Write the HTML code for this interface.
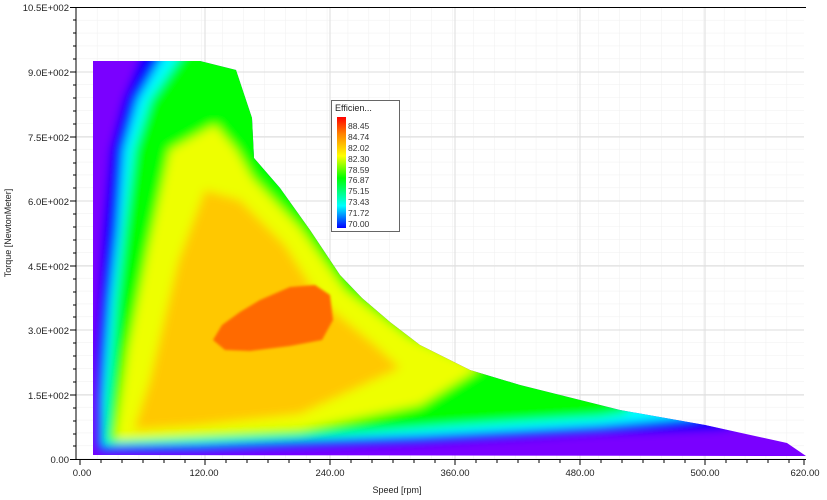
<!DOCTYPE html>
<html><head><meta charset="utf-8"><style>
html,body{margin:0;padding:0;background:#fff;}
svg{display:block;font-family:"Liberation Sans",sans-serif;}
</style></head><body>
<svg width="827" height="500" viewBox="0 0 827 500" xmlns="http://www.w3.org/2000/svg">
<defs>
<pattern id="g" x="76" y="7" width="20.9" height="12.9" patternUnits="userSpaceOnUse">
<path d="M0 0V12.9M0 0H20.9" stroke="#efefef" stroke-width="1" fill="none"/>
</pattern>
<filter id="b" x="-10%" y="-10%" width="120%" height="120%"><feGaussianBlur stdDeviation="5"/></filter>
<filter id="b2"><feGaussianBlur stdDeviation="1.2"/></filter>
<clipPath id="c"><path d="M93,61 L200,61 L236,70 L252,118 L254,158 L280,188 L310,230 L340,275 L362,298 L390,322 L420,345 L470,370 L520,385 L620,410 L705,425 L787,443 L806,456 L93,455 Z"/></clipPath>
<linearGradient id="lg" x1="0" y1="1" x2="0" y2="0">
<stop offset="0" stop-color="#0000ff"/><stop offset="0.2" stop-color="#00ffff"/><stop offset="0.45" stop-color="#00ff00"/><stop offset="0.65" stop-color="#ffff00"/><stop offset="0.85" stop-color="#ff8000"/><stop offset="1" stop-color="#ff0000"/>
</linearGradient>
</defs>
<rect x="76" y="7" width="728" height="452" fill="url(#g)"/>
<g stroke="#dedede"><line x1="205" y1="7" x2="205" y2="459"/><line x1="330" y1="7" x2="330" y2="459"/><line x1="455" y1="7" x2="455" y2="459"/><line x1="580" y1="7" x2="580" y2="459"/><line x1="705" y1="7" x2="705" y2="459"/>
<line x1="76" y1="72" x2="804" y2="72"/><line x1="76" y1="137" x2="804" y2="137"/><line x1="76" y1="201" x2="804" y2="201"/><line x1="76" y1="266" x2="804" y2="266"/><line x1="76" y1="330" x2="804" y2="330"/><line x1="76" y1="395" x2="804" y2="395"/></g>
<g clip-path="url(#c)">
<rect x="90" y="55" width="720" height="405" fill="#7a00ff"/>
<g filter="url(#b)">
<path fill="#0000ff" d="M150,40 L280,40 L300,150 L350,210 L400,290 L460,330 L560,365 L660,395 L760,420 L720,428 L600,432 L420,442 L200,450 L98,451 L98,350 L105,230 L112,150 L125,100 Z"/>
<path fill="#00ffff" d="M172,40 L280,40 L300,150 L350,210 L400,290 L460,330 L560,365 L650,395 L700,416 L600,426 L420,436 L200,445 L102,447 L102,400 L110,300 L118,230 L124,150 L138,100 Z"/>
<path fill="#00ff00" d="M192,40 L280,40 L300,150 L350,210 L400,290 L460,330 L560,365 L640,395 L625,413 L600,417 L450,426 L300,437 L106,443 L108,400 L116,300 L124,230 L134,150 L150,100 Z"/>
<path fill="#eeff00" d="M215,125 L236,150 L252,178 L300,228 L345,290 L410,338 L480,368 L420,405 L300,430 L115,440 L128,350 L148,250 L170,150 Z"/>
<path fill="#ffc800" d="M205,190 L240,200 L285,245 L320,300 L375,345 L400,368 L300,414 L200,425 L134,430 L150,380 L178,262 Z"/>
</g>
<path filter="url(#b2)" fill="#ff6a00" d="M213,340 L222,325 L240,312 L260,300 L290,287 L315,285 L330,295 L333,320 L322,340 L290,346 L250,351 L225,350 Z"/>
</g>
<g stroke="#000" stroke-width="1" fill="none">
<line x1="76" y1="7" x2="76" y2="459.5"/><line x1="76" y1="459.5" x2="806" y2="459.5"/>
<line x1="76" y1="7.5" x2="806" y2="7.5"/>
</g>
<g stroke="#000">
<path d="M70,7.5H76M70,72H76M70,137H76M70,201H76M70,266H76M70,330H76M70,395H76M70,459.5H76" />
<path d="M73,20H76M73,33H76M73,46H76M73,59H76M73,85H76M73,98H76M73,111H76M73,124H76M73,150H76M73,163H76M73,175H76M73,188H76M73,214H76M73,227H76M73,240H76M73,253H76M73,279H76M73,292H76M73,305H76M73,317H76M73,343H76M73,356H76M73,369H76M73,382H76M73,408H76M73,421H76M73,434H76M73,446H76"/>
<path d="M80,459V465M205,459V465M330,459V465M455,459V465M580,459V465M705,459V465M804,459V465"/>
<path d="M101,459V463M122,459V463M143,459V463M164,459V463M185,459V463M226,459V463M247,459V463M268,459V463M289,459V463M310,459V463M351,459V463M372,459V463M393,459V463M414,459V463M435,459V463M476,459V463M497,459V463M518,459V463M539,459V463M560,459V463M601,459V463M622,459V463M643,459V463M664,459V463M685,459V463M726,459V463M747,459V463M768,459V463M789,459V463"/>
</g>
<g font-size="9.5" fill="#222" text-anchor="end">
<text x="69" y="11">10.5E+002</text><text x="69" y="76">9.0E+002</text><text x="69" y="141">7.5E+002</text><text x="69" y="205">6.0E+002</text><text x="69" y="270">4.5E+002</text><text x="69" y="334">3.0E+002</text><text x="69" y="399">1.5E+002</text><text x="69" y="463">0.00</text>
</g>
<g font-size="9.5" fill="#222" text-anchor="middle">
<text x="82" y="476">0.00</text><text x="204" y="476">120.00</text><text x="330" y="476">240.00</text><text x="455" y="476">360.00</text><text x="580" y="476">480.00</text><text x="705" y="476">500.00</text><text x="805" y="476">620.00</text>
<text x="397" y="493" font-size="9">Speed [rpm]</text>
</g>
<text transform="translate(11,233) rotate(-90)" font-size="9" fill="#222" text-anchor="middle">Torque [NewtonMeter]</text>
<rect x="331.5" y="100.5" width="68" height="131" fill="#fff" stroke="#666"/>
<text x="335" y="111" font-size="9" fill="#222">Efficien...</text>
<rect x="337" y="117" width="9" height="111" fill="url(#lg)"/>
<g font-size="8.5" fill="#333">
<text x="348" y="129">88.45</text><text x="348" y="140">84.74</text><text x="348" y="151">82.02</text><text x="348" y="162">82.30</text><text x="348" y="173">78.59</text><text x="348" y="183">76.87</text><text x="348" y="194">75.15</text><text x="348" y="205">73.43</text><text x="348" y="216">71.72</text><text x="348" y="227">70.00</text>
</g>
</svg>
</body></html>
